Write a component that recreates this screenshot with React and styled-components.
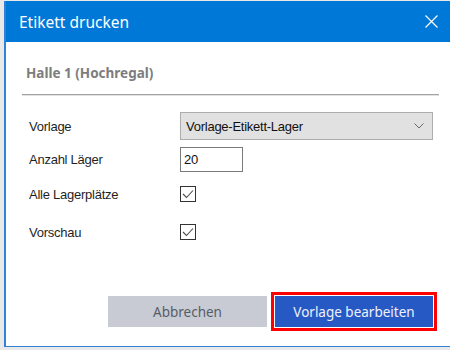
import React from 'react';
import styled, { createGlobalStyle } from 'styled-components';

const GlobalStyle = createGlobalStyle`
    html, body {
        margin: 0;
        padding: 0;
        background: #e9e9e9;
        overflow: hidden;
        font-family: 'Noto Sans', 'Open Sans', sans-serif;
    }
    #root {
        padding-top: 1px;
    }
`;

const StyledWindow = styled.div`
    box-sizing: border-box;
    display: flex;
    flex-direction: column;
    width: 458px;
    height: 346px;
    margin-left: 4px;
    background: #fff;
    border-left: 2px solid #2f82d8;
    border-bottom: 1px solid #2f82d8;
`;

const StyledTitleBar = styled.header`
    display: flex;
    align-items: center;
    justify-content: space-between;
    height: 41px;
    flex-shrink: 0;
    padding: 0 24px 0 13px;
    background: #0078d7;
    color: #fff;
    font-size: 15.5px;
`;

const StyledClose = styled.svg`
    display: block;
`;

const StyledHeading = styled.div`
    margin: 0 23px 0 16px;
    padding: 22px 0 11px 4px;
    border-bottom: 1px solid #a3a3a3;
    box-shadow: 0 1px 0 #e2e2e2;
    color: #7d7d7d;
    font-size: 13.5px;
    font-weight: 700;
    line-height: 19px;
`;

const StyledForm = styled.div`
    display: flex;
    flex-direction: column;
    padding: 17px 0 0 23px;
    font-family: 'Liberation Sans', Arial, sans-serif;
    font-size: 13px;
    letter-spacing: -0.25px;
`;

const StyledRow = styled.div`
    display: grid;
    grid-template-columns: 151px auto;
    align-items: center;
    height: ${props => props.h}px;
    margin-top: ${props => props.mt || 0}px;
`;

const StyledLabel = styled.span`
    color: #1f1f1f;
`;

const StyledSelect = styled.div`
    box-sizing: border-box;
    display: flex;
    align-items: center;
    justify-content: space-between;
    width: 253px;
    height: 28px;
    padding: 0 8px 0 5px;
    background: #e1e1e1;
    border: 1px solid #adadad;
    color: #111;
`;

const StyledInput = styled.div`
    box-sizing: border-box;
    display: flex;
    align-items: center;
    width: 63px;
    height: 25px;
    padding-left: 3px;
    background: #fff;
    border: 1px solid #7a7a7a;
    color: #111;
`;

const StyledCheck = styled.div`
    box-sizing: border-box;
    display: flex;
    align-items: center;
    justify-content: center;
    width: 16px;
    height: 16px;
    border: 1px solid #333;
    background: #fff;
`;

const StyledFooter = styled.div`
    display: flex;
    justify-content: flex-end;
    gap: 8px;
    margin-top: auto;
    padding: 0 29px 19px 0;
`;

const StyledButton = styled.div`
    display: flex;
    align-items: center;
    justify-content: center;
    width: ${props => props.w}px;
    height: 31px;
    background: ${props => (props.primary ? '#2759c5' : '#c8cbd4')};
    color: ${props => (props.primary ? '#eef1fb' : '#585c68')};
    font-size: 13.5px;
    box-shadow: ${props =>
        props.primary ? '0 0 0 1px #fff, 0 0 0 4px #ff0000' : 'none'};
`;

const Checkmark = () => (
    <svg width="12" height="10" viewBox="0 0 12 10">
        <path d="M1 5 L4.5 8.5 L11 1.5" fill="none" stroke="#4d4d4d" strokeWidth="1.1" />
    </svg>
);

const App = () => (
    <>
        <GlobalStyle />
        <StyledWindow>
            <StyledTitleBar>
                <span>Etikett drucken</span>
                <StyledClose width="13" height="13" viewBox="0 0 13 13">
                    <path d="M0.5 0.5 L12.5 12.5 M12.5 0.5 L0.5 12.5" stroke="#fff" strokeWidth="1.2" />
                </StyledClose>
            </StyledTitleBar>
            <StyledHeading>Halle 1 (Hochregal)</StyledHeading>
            <StyledForm>
                <StyledRow h={28}>
                    <StyledLabel>Vorlage</StyledLabel>
                    <StyledSelect>
                        <span>Vorlage-Etikett-Lager</span>
                        <svg width="10" height="6" viewBox="0 0 10 6">
                            <path d="M0.5 0.5 L5 5 L9.5 0.5" fill="none" stroke="#6a6a6a" strokeWidth="1" />
                        </svg>
                    </StyledSelect>
                </StyledRow>
                <StyledRow h={27} mt={6}>
                    <StyledLabel>Anzahl Läger</StyledLabel>
                    <StyledInput>20</StyledInput>
                </StyledRow>
                <StyledRow h={28} mt={7}>
                    <StyledLabel>Alle Lagerplätze</StyledLabel>
                    <StyledCheck>
                        <Checkmark />
                    </StyledCheck>
                </StyledRow>
                <StyledRow h={28} mt={10}>
                    <StyledLabel>Vorschau</StyledLabel>
                    <StyledCheck>
                        <Checkmark />
                    </StyledCheck>
                </StyledRow>
            </StyledForm>
            <StyledFooter>
                <StyledButton w={159}>Abbrechen</StyledButton>
                <StyledButton w={158} primary>
                    Vorlage bearbeiten
                </StyledButton>
            </StyledFooter>
        </StyledWindow>
    </>
);

export default App;
